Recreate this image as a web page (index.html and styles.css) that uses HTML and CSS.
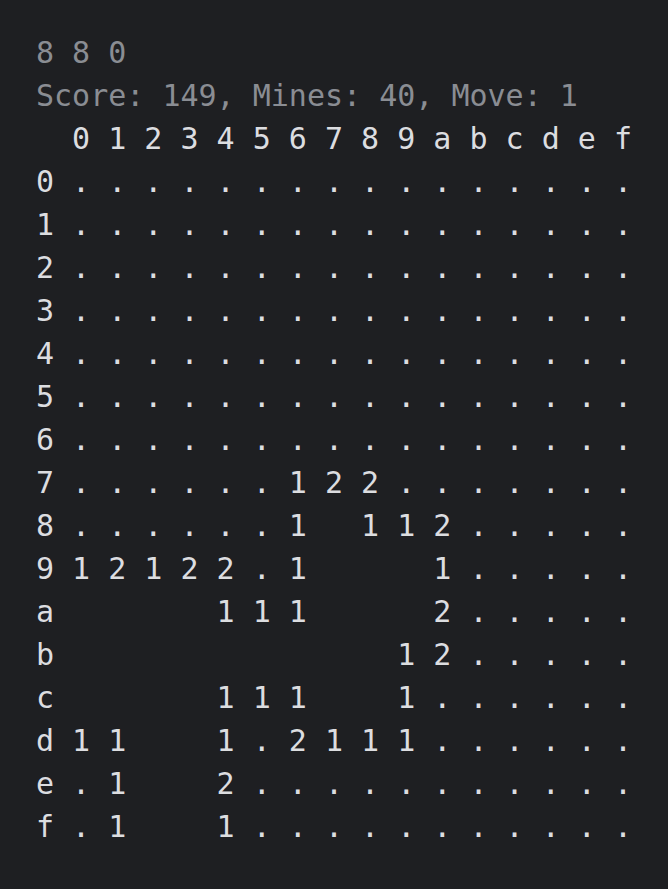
FILE: index.html
```html
<!DOCTYPE html>
<html>
<head>
<meta charset="utf-8">
<link rel="stylesheet" href="styles.css">
</head>
<body>
<div class="term">
<pre class="info">8 8 0
Score: 149, Mines: 40, Move: 1</pre>
<pre class="board">  0 1 2 3 4 5 6 7 8 9 a b c d e f
0 . . . . . . . . . . . . . . . .
1 . . . . . . . . . . . . . . . .
2 . . . . . . . . . . . . . . . .
3 . . . . . . . . . . . . . . . .
4 . . . . . . . . . . . . . . . .
5 . . . . . . . . . . . . . . . .
6 . . . . . . . . . . . . . . . .
7 . . . . . . 1 2 2 . . . . . . .
8 . . . . . . 1   1 1 2 . . . . .
9 1 2 1 2 2 . 1       1 . . . . .
a         1 1 1       2 . . . . .
b                   1 2 . . . . .
c         1 1 1     1 . . . . . .
d 1 1     1 . 2 1 1 1 . . . . . .
e . 1     2 . . . . . . . . . . .
f . 1     1 . . . . . . . . . . .</pre>
</div>
</body>
</html>
```
FILE: styles.css
```css
html, body {
  margin: 0;
  padding: 0;
  background: #1e1f22;
}
.term {
  padding: 31px 36px;
}
pre {
  margin: 0;
  font-family: "DejaVu Sans Mono", monospace;
  font-size: 30px;
  line-height: 43px;
  white-space: pre;
}
.info {
  color: #8a8d93;
}
.board {
  color: #dcdde0;
}
```
